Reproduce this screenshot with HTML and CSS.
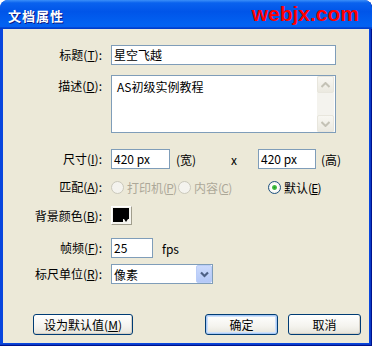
FILE: index.html
```html
<!DOCTYPE html>
<html>
<head>
<meta charset="utf-8">
<link rel="stylesheet" href="styles.css">
</head>
<body>
<div class="win">
  <div class="titlebar">
    <span class="title">文档属性</span>
    <span class="brand">webjx.com</span>
  </div>
  <div class="body">
    <div class="row r1">
      <span class="lbl">标题(<u>T</u>):</span>
      <div class="field f-title">星空飞越</div>
    </div>
    <div class="row r2">
      <span class="lbl lbl-top">描述(<u>D</u>):</span>
      <div class="textarea">
        <div class="ta-text">AS初级实例教程</div>
        <div class="scroll">
          <div class="sbtn"><svg width="9" height="6" viewBox="0 0 9 6"><path d="M0.5 5 L4.5 1 L8.5 5" fill="none" stroke="#c4c2b6" stroke-width="2"/></svg></div>
          <div class="strack"></div>
          <div class="sbtn"><svg width="9" height="6" viewBox="0 0 9 6"><path d="M0.5 1 L4.5 5 L8.5 1" fill="none" stroke="#c4c2b6" stroke-width="2"/></svg></div>
        </div>
      </div>
    </div>
    <div class="row r3">
      <span class="lbl">尺寸(<u>I</u>):</span>
      <div class="field f-num">420 px</div>
      <span class="unit-w">(宽)</span>
      <span class="times">x</span>
      <div class="field f-num2">420 px</div>
      <span class="unit-h">(高)</span>
    </div>
    <div class="row r4">
      <span class="lbl">匹配(<u>A</u>):</span>
      <span class="radio disabled g1"><span class="dot"></span>打印机<span class="acc">(<u>P</u>)</span></span>
      <span class="radio disabled g2"><span class="dot"></span>内容<span class="acc">(<u>C</u>)</span></span>
      <span class="radio checked"><span class="dot"></span>默认<span class="acc">(<u>E</u>)</span></span>
    </div>
    <div class="row r5">
      <span class="lbl">背景颜色(<u>B</u>):</span>
      <div class="swatch"><div class="swatch-color"><span class="notch"></span></div></div>
    </div>
    <div class="row r6">
      <span class="lbl">帧频(<u>F</u>):</span>
      <div class="field f-fps">25</div>
      <span class="fps">fps</span>
    </div>
    <div class="row r7">
      <span class="lbl">标尺单位(<u>R</u>):</span>
      <div class="select">
        <span class="sel-text">像素</span>
        <span class="sel-btn"><svg width="9" height="7" viewBox="0 0 9 7"><path d="M1 1.5 L4.5 5 L8 1.5" fill="none" stroke="#4d6185" stroke-width="2.2"/></svg></span>
      </div>
    </div>
    <div class="buttons">
      <div class="btn b-default">设为默认值(<u>M</u>)</div>
      <div class="btn b-ok">确定</div>
      <div class="btn b-cancel">取消</div>
    </div>
  </div>
</div>
</body>
</html>
```

FILE: styles.css
```css
html, body {
  margin: 0;
  padding: 0;
}
body {
  font-family: "Noto Sans CJK SC", "Noto Sans", sans-serif;
  font-size: 12px;
  color: #000;
}
.win {
  width: 372px;
  height: 346px;
  box-sizing: border-box;
  background: #0846de;
  border-radius: 8px 8px 0 0;
  overflow: hidden;
  display: flex;
  flex-direction: column;
  box-shadow: inset -1px -1px #00138c, inset -2px -2px #0b3bc8;
}
.titlebar {
  height: 29px;
  flex: none;
  display: flex;
  align-items: center;
  justify-content: space-between;
  padding: 0 13px 0 8px;
  background: linear-gradient(180deg, #3b8ff8 0%, #0a62ee 10%, #0055e9 40%, #0262f2 85%, #0560f0 92%, #0040d0 96%, #003bc9 100%);
}
.title {
  color: #fff;
  font-weight: bold;
  font-size: 13px;
  letter-spacing: 1px;
  text-shadow: 1px 1px #0a1883;
  margin-top: 1px;
}
.brand {
  color: #ff0000;
  font-family: "Liberation Sans", Arial, sans-serif;
  font-weight: bold;
  font-size: 21px;
  line-height: 21px;
  margin-top: -2px;
}
.body {
  flex: 1;
  background: #ece9d8;
  margin: 0 3px 3px 3px;
  display: flex;
  flex-direction: column;
}
.row {
  display: flex;
  align-items: center;
}
.lbl {
  width: 99px;
  margin-right: 9px;
  text-align: right;
  flex: none;
  line-height: 16px;
  white-space: nowrap;
}
u { text-decoration: underline; text-underline-offset: 1px; }
.r1 { margin-top: 16px; }
.r2 { margin-top: 10px; align-items: flex-start; }
.r3 { margin-top: 16px; }
.r4 { margin-top: 9px; height: 18px; }
.r5 { margin-top: 10px; }
.r6 { margin-top: 13px; }
.r7 { margin-top: 6px; }
.lbl-top { padding-top: 3px; }

.field {
  box-sizing: border-box;
  height: 20px;
  border: 1px solid #7f9db9;
  background: #fff;
  padding: 0 2px;
  line-height: 17px;
  white-space: nowrap;
}
.f-title { width: 225px; }
.f-num { width: 59px; }
.f-num2 { width: 58px; }
.f-fps { width: 42px; }
.unit-w { width: 55px; margin-left: 6px; }
.times { width: 27px; }
.unit-h { margin-left: 5px; }
.fps { margin-left: 9px; }

.textarea {
  box-sizing: border-box;
  width: 225px;
  height: 58px;
  border: 1px solid #7f9db9;
  background: #fff;
  display: flex;
}
.ta-text {
  flex: 1;
  padding: 2px 0 0 5px;
  line-height: 17px;
}
.scroll {
  width: 17px;
  margin-right: 1px;
  display: flex;
  flex-direction: column;
  background: #f5f4ef;
}
.sbtn {
  height: 17px;
  box-sizing: border-box;
  border: 1px solid #e8e6dd;
  border-radius: 2px;
  background: linear-gradient(180deg, #f8f7f2, #ebe9e0);
  display: flex;
  align-items: center;
  justify-content: center;
}
.strack { flex: 1; background: #f4f3ee; }

.radio {
  display: flex;
  align-items: center;
  white-space: nowrap;
  flex: none;
}
.radio .acc { letter-spacing: -0.8px; }
.radio .dot {
  width: 13px;
  height: 13px;
  box-sizing: border-box;
  border-radius: 50%;
  margin-right: 3px;
  flex: none;
}
.radio.disabled { color: #aca899; }
.radio.disabled .dot {
  border: 1px solid #cac8bb;
  background: #f4f3ee;
}
.g1 { width: 67px; }
.g2 { width: 90px; }
.radio.checked .dot {
  border: 1px solid #1c5180;
  background: radial-gradient(circle at 50% 50%, #21a121 0, #4cc04c 2px, #fff 3px, #f0efe8 6px);
}

.swatch {
  box-sizing: border-box;
  width: 21px;
  height: 19px;
  background: #f5f4ee;
  border: 1px solid;
  border-color: #fff #a19e8d #a19e8d #fff;
  padding: 1px 2px 2px 1px;
}
.swatch-color {
  width: 100%;
  height: 100%;
  background: #000;
  position: relative;
}
.notch {
  position: absolute;
  right: -1px;
  bottom: -1px;
  width: 7px;
  height: 4px;
  background: #f5f4ee;
}
.notch::after {
  content: "";
  position: absolute;
  left: 1px;
  top: 0;
  border-left: 2.5px solid transparent;
  border-right: 2.5px solid transparent;
  border-top: 3px solid #000;
}

.select {
  box-sizing: border-box;
  width: 102px;
  height: 20px;
  border: 1px solid #7f9db9;
  background: #fff;
  display: flex;
  align-items: center;
  justify-content: space-between;
  padding: 0 0 0 2px;
}
.sel-btn {
  width: 16px;
  height: 18px;
  box-sizing: border-box;
  border: 1px solid #bacdf8;
  border-radius: 2px;
  background: linear-gradient(180deg, #cbdafc, #b3c8f7);
  display: flex;
  align-items: center;
  justify-content: center;
}

.buttons {
  margin-top: 30px;
  display: flex;
  padding-left: 30px;
}
.btn {
  box-sizing: border-box;
  height: 21px;
  border: 1px solid #003c74;
  border-radius: 3px;
  background: linear-gradient(180deg, #fff 0%, #f4f3ee 60%, #e6e4da 100%);
  box-shadow: inset -1px -1px #d6d0c5;
  display: flex;
  align-items: center;
  justify-content: center;
  line-height: 17px;
}
.b-default { width: 100px; }
.b-ok {
  width: 73px;
  margin-left: 72px;
  box-shadow: inset 0 0 0 1px #a9c9f5, inset 0 0 0 2px #cde0fa;
}
.b-cancel { width: 73px; margin-left: 10px; }
```
